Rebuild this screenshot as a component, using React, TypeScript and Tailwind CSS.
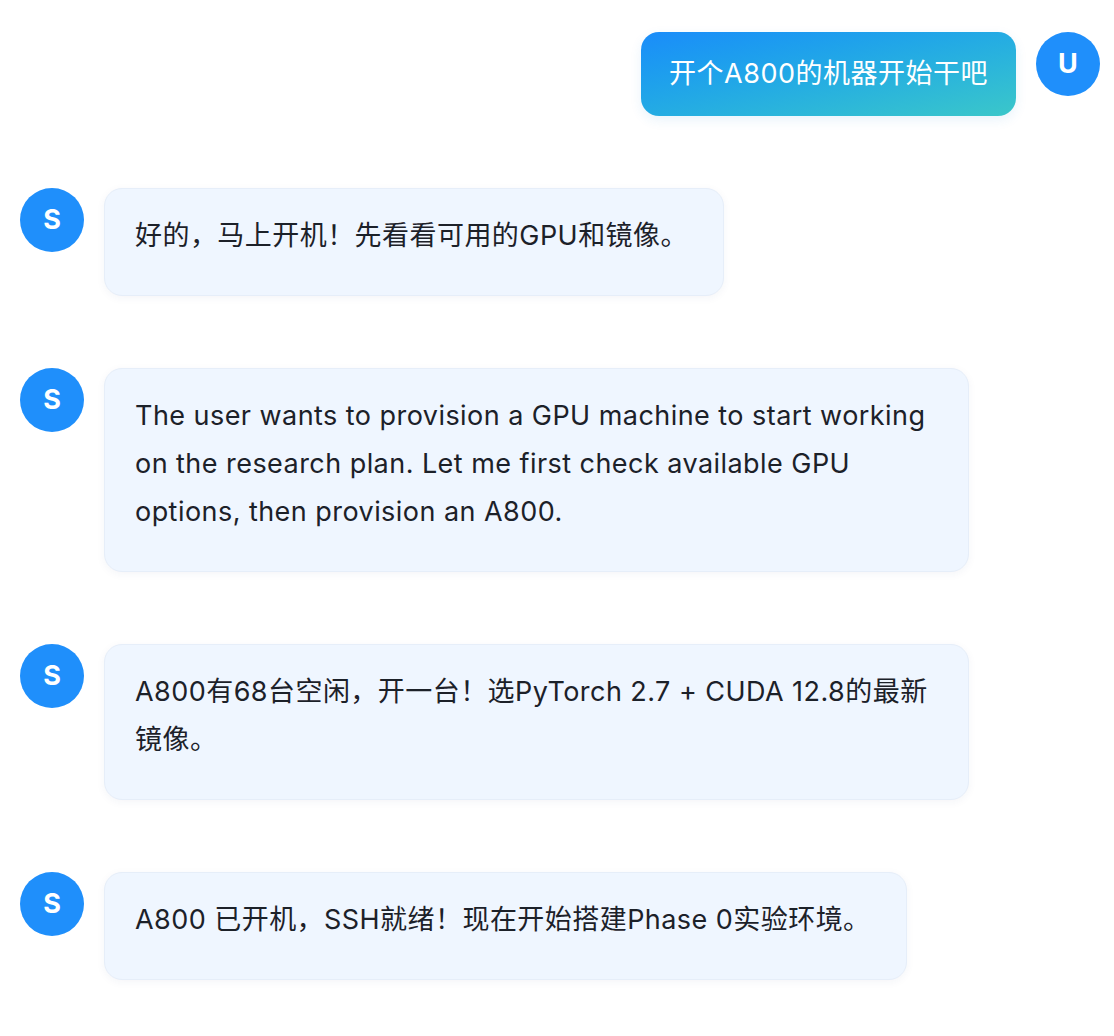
const FONT = "font-['Inter','Noto_Sans_CJK_SC',sans-serif]";

type Msg = { role: "user" | "assistant"; text: string };

const messages: Msg[] = [
  { role: "user", text: "开个A800的机器开始干吧" },
  { role: "assistant", text: "好的，马上开机！先看看可用的GPU和镜像。" },
  {
    role: "assistant",
    text: "The user wants to provision a GPU machine to start working on the research plan. Let me first check available GPU options, then provision an A800.",
  },
  { role: "assistant", text: "A800有68台空闲，开一台！选PyTorch 2.7 + CUDA 12.8的最新镜像。" },
  { role: "assistant", text: "A800 已开机，SSH就绪！现在开始搭建Phase 0实验环境。" },
];

function Avatar({ letter }: { letter: string }) {
  return (
    <div className="flex h-16 w-16 shrink-0 items-center justify-center rounded-full bg-[#1f8ffb] text-[27px] font-bold text-white">
      {letter}
    </div>
  );
}

export default function App() {
  return (
    <div className={`min-h-[1036px] w-full bg-white pt-8 pr-[14px] pl-5 ${FONT}`}>
      <div className="flex flex-col gap-[72px]">
        {messages.map((m, i) =>
          m.role === "user" ? (
            <div key={i} className="flex items-start justify-end gap-5">
              <div className="rounded-[18px] bg-linear-to-br from-[#1b8cfa] to-[#3bc7c9] px-[28px] py-[18px] text-[27px] leading-[48px] tracking-[0.5px] text-white shadow-[0_4px_12px_rgba(40,140,220,0.1)]">
                {m.text}
              </div>
              <Avatar letter="U" />
            </div>
          ) : (
            <div key={i} className="flex items-start gap-5">
              <Avatar letter="S" />
              <div className="max-w-[865px] rounded-[18px] border border-[#e6eef9] bg-[#eff6ff] pt-[23px] pr-[35px] pb-[35px] pl-[30px] text-[27px] leading-[48px] tracking-[0.45px] text-[#1c2129] shadow-[0_2px_8px_rgba(30,60,120,0.05)]">
                {m.text}
              </div>
            </div>
          ),
        )}
      </div>
    </div>
  );
}
